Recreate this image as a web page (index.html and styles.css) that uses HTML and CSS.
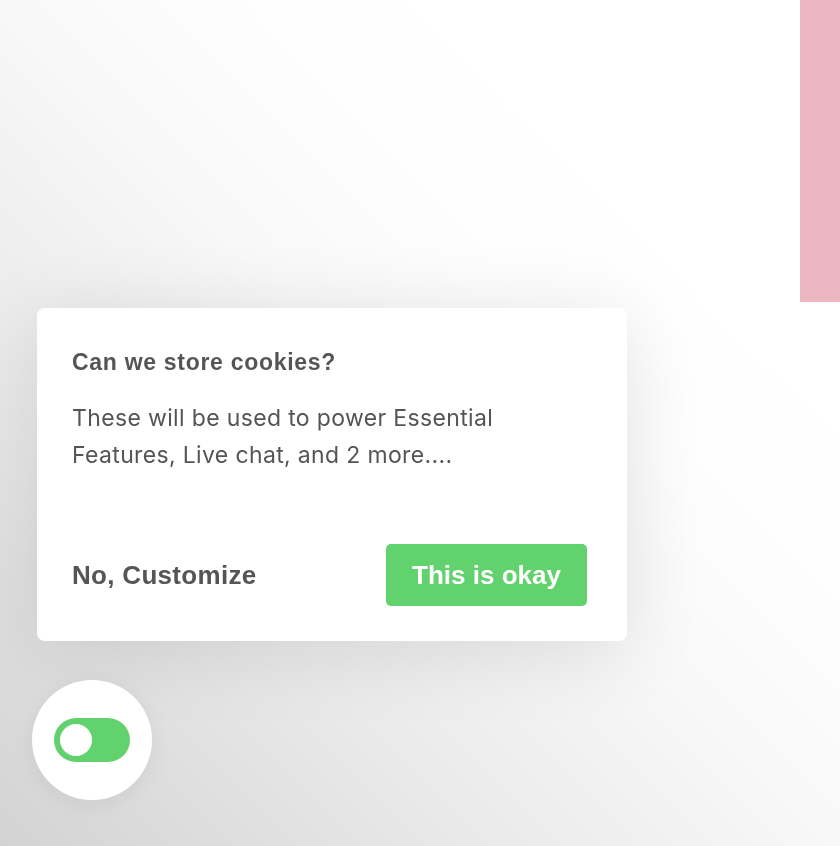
FILE: index.html
```html
<!DOCTYPE html>
<html lang="en">
<head>
    <meta charset="UTF-8">
    <meta name="viewport" content="width=device-width, initial-scale=1.0">
    <title>Cookies</title>
    <link rel="stylesheet" href="styles.css">
</head>
<body>
    <div class="side-tab"></div>

    <div class="cookie-card">
        <h2 class="cookie-title">Can we store cookies?</h2>
        <p class="cookie-text">These will be used to power Essential Features, Live chat, and 2 more....</p>
        <div class="cookie-actions">
            <a class="cookie-link" href="#">No, Customize</a>
            <button class="cookie-accept">This is okay</button>
        </div>
    </div>

    <div class="cookie-toggle">
        <div class="switch">
            <div class="knob"></div>
        </div>
    </div>
</body>
</html>
```

FILE: styles.css
```css
html, body {
    height: 100%;
}

body {
    margin: 0;
    font-family: "Liberation Sans", Arial, sans-serif;
    color: #555;
    background: linear-gradient(to top right, #d3d3d3 0%, #e9e9e9 28%, #f8f8f8 50%, #fdfdfd 62%, #fff 75%, #fff 100%);
    overflow: hidden;
}

.side-tab {
    position: absolute;
    top: 0;
    right: 0;
    width: 40px;
    height: 302px;
    background: #ecb7c0;
}

.cookie-card {
    position: fixed;
    left: 37px;
    bottom: 205px;
    width: 590px;
    box-sizing: border-box;
    padding: 40px 40px 35px 35px;
    background: #fff;
    border-radius: 8px;
    box-shadow: 0 10px 80px rgba(0, 0, 0, 0.11);
}

.cookie-title {
    margin: 0;
    font-size: 23px;
    line-height: 28px;
    font-weight: bold;
    letter-spacing: 0.7px;
}

.cookie-text {
    margin: 24px 0 0;
    font-family: Inter, "Open Sans", sans-serif;
    font-size: 23px;
    line-height: 37px;
    letter-spacing: 0.35px;
    max-width: 460px;
}

.cookie-actions {
    display: flex;
    justify-content: space-between;
    align-items: center;
    margin-top: 70px;
}

.cookie-link {
    font-size: 26px;
    font-weight: bold;
    letter-spacing: 0.3px;
    color: #555;
    text-decoration: none;
}

.cookie-accept {
    width: 201px;
    height: 62px;
    border: none;
    border-radius: 5px;
    background: #62d26f;
    color: #fff;
    font-family: "Liberation Sans", Arial, sans-serif;
    font-size: 26px;
    font-weight: bold;
    cursor: pointer;
}

.cookie-toggle {
    position: fixed;
    left: 32px;
    bottom: 46px;
    width: 120px;
    height: 120px;
    border-radius: 50%;
    background: #fff;
    box-shadow: 0 4px 24px rgba(0, 0, 0, 0.06);
    display: flex;
    justify-content: center;
    align-items: center;
}

.switch {
    width: 76px;
    height: 44px;
    box-sizing: border-box;
    padding: 6px;
    border-radius: 22px;
    background: #62d26f;
}

.knob {
    width: 32px;
    height: 32px;
    border-radius: 50%;
    background: #fff;
}
```
